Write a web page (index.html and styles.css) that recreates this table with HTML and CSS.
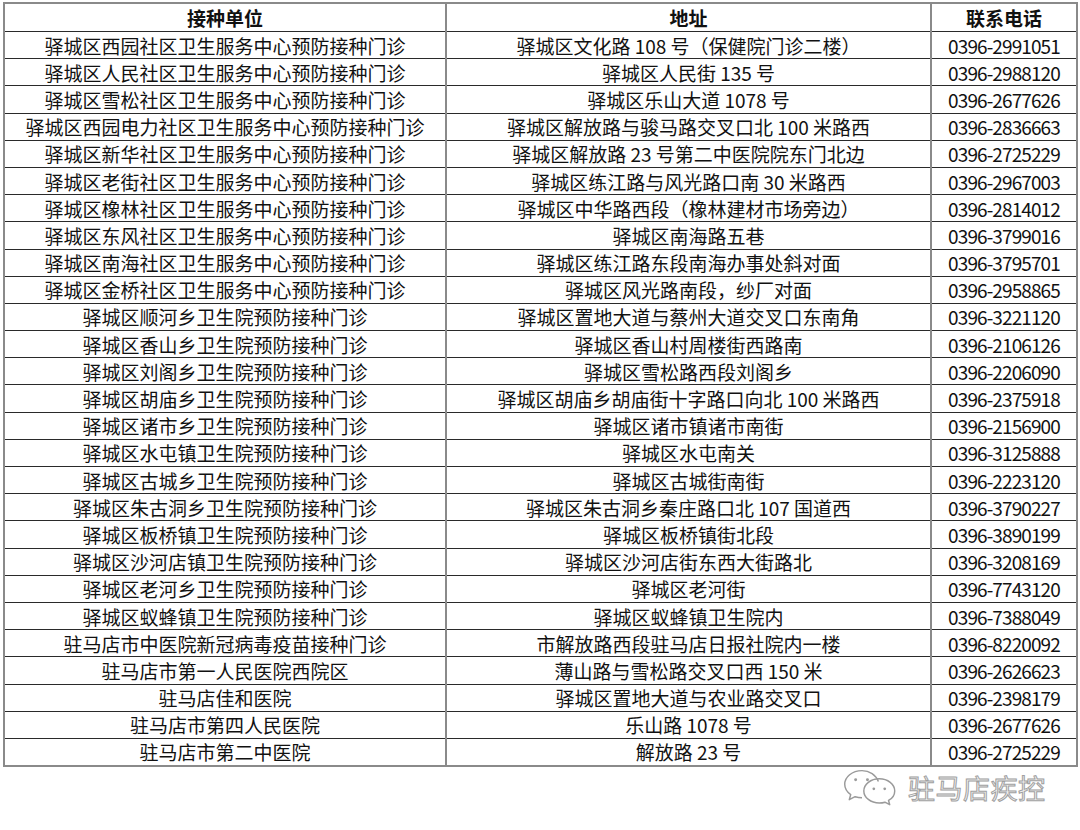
FILE: index.html
```html
<!DOCTYPE html>
<html lang="zh">
<head>
<meta charset="utf-8">
<link rel="stylesheet" href="styles.css">
</head>
<body>
<div class="page">
<table class="grid">
<colgroup><col class="c1"><col class="c2"><col class="c3"></colgroup>
<thead>
<tr><th>接种单位</th><th>地址</th><th>联系电话</th></tr>
</thead>
<tbody>
<tr><td>驿城区西园社区卫生服务中心预防接种门诊</td><td>驿城区文化路 108 号（保健院门诊二楼）</td><td class="tel">0396-2991051</td></tr>
<tr><td>驿城区人民社区卫生服务中心预防接种门诊</td><td>驿城区人民街 135 号</td><td class="tel">0396-2988120</td></tr>
<tr><td>驿城区雪松社区卫生服务中心预防接种门诊</td><td>驿城区乐山大道 1078 号</td><td class="tel">0396-2677626</td></tr>
<tr><td>驿城区西园电力社区卫生服务中心预防接种门诊</td><td>驿城区解放路与骏马路交叉口北 100 米路西</td><td class="tel">0396-2836663</td></tr>
<tr><td>驿城区新华社区卫生服务中心预防接种门诊</td><td>驿城区解放路 23 号第二中医院院东门北边</td><td class="tel">0396-2725229</td></tr>
<tr><td>驿城区老街社区卫生服务中心预防接种门诊</td><td>驿城区练江路与风光路口南 30 米路西</td><td class="tel">0396-2967003</td></tr>
<tr><td>驿城区橡林社区卫生服务中心预防接种门诊</td><td>驿城区中华路西段（橡林建材市场旁边）</td><td class="tel">0396-2814012</td></tr>
<tr><td>驿城区东风社区卫生服务中心预防接种门诊</td><td>驿城区南海路五巷</td><td class="tel">0396-3799016</td></tr>
<tr><td>驿城区南海社区卫生服务中心预防接种门诊</td><td>驿城区练江路东段南海办事处斜对面</td><td class="tel">0396-3795701</td></tr>
<tr><td>驿城区金桥社区卫生服务中心预防接种门诊</td><td>驿城区风光路南段，纱厂对面</td><td class="tel">0396-2958865</td></tr>
<tr><td>驿城区顺河乡卫生院预防接种门诊</td><td>驿城区置地大道与蔡州大道交叉口东南角</td><td class="tel">0396-3221120</td></tr>
<tr><td>驿城区香山乡卫生院预防接种门诊</td><td>驿城区香山村周楼街西路南</td><td class="tel">0396-2106126</td></tr>
<tr><td>驿城区刘阁乡卫生院预防接种门诊</td><td>驿城区雪松路西段刘阁乡</td><td class="tel">0396-2206090</td></tr>
<tr><td>驿城区胡庙乡卫生院预防接种门诊</td><td>驿城区胡庙乡胡庙街十字路口向北 100 米路西</td><td class="tel">0396-2375918</td></tr>
<tr><td>驿城区诸市乡卫生院预防接种门诊</td><td>驿城区诸市镇诸市南街</td><td class="tel">0396-2156900</td></tr>
<tr><td>驿城区水屯镇卫生院预防接种门诊</td><td>驿城区水屯南关</td><td class="tel">0396-3125888</td></tr>
<tr><td>驿城区古城乡卫生院预防接种门诊</td><td>驿城区古城街南街</td><td class="tel">0396-2223120</td></tr>
<tr><td>驿城区朱古洞乡卫生院预防接种门诊</td><td>驿城区朱古洞乡秦庄路口北 107 国道西</td><td class="tel">0396-3790227</td></tr>
<tr><td>驿城区板桥镇卫生院预防接种门诊</td><td>驿城区板桥镇街北段</td><td class="tel">0396-3890199</td></tr>
<tr><td>驿城区沙河店镇卫生院预防接种门诊</td><td>驿城区沙河店街东西大街路北</td><td class="tel">0396-3208169</td></tr>
<tr><td>驿城区老河乡卫生院预防接种门诊</td><td>驿城区老河街</td><td class="tel">0396-7743120</td></tr>
<tr><td>驿城区蚁蜂镇卫生院预防接种门诊</td><td>驿城区蚁蜂镇卫生院内</td><td class="tel">0396-7388049</td></tr>
<tr><td>驻马店市中医院新冠病毒疫苗接种门诊</td><td>市解放路西段驻马店日报社院内一楼</td><td class="tel">0396-8220092</td></tr>
<tr><td>驻马店市第一人民医院西院区</td><td>薄山路与雪松路交叉口西 150 米</td><td class="tel">0396-2626623</td></tr>
<tr><td>驻马店佳和医院</td><td>驿城区置地大道与农业路交叉口</td><td class="tel">0396-2398179</td></tr>
<tr><td>驻马店市第四人民医院</td><td>乐山路 1078 号</td><td class="tel">0396-2677626</td></tr>
<tr><td>驻马店市第二中医院</td><td>解放路 23 号</td><td class="tel">0396-2725229</td></tr>
</tbody>
</table>
<div class="mark">
<svg class="wx" width="64" height="40" viewBox="0 0 70 44" fill="none" stroke="#9a9a9a" stroke-width="1.6" stroke-linejoin="round">
<path d="M24 4C13 4 5 11 5 19c0 4.6 2.6 8.6 6.6 11.3L10 36l6.4-3.3c2.3.7 4.9 1.1 7.6 1.1" />
<path d="M42 16c-2.5-7-9.8-12-18-12" />
<circle cx="17" cy="14" r="1.6" fill="#9a9a9a" stroke="none"/>
<circle cx="30" cy="14" r="1.6" fill="#9a9a9a" stroke="none"/>
<path d="M43 17c-9.4 0-17 6-17 13.3S33.6 43.6 43 43.6c2.2 0 4.3-.3 6.2-.9l5.3 2.8-1.3-4.7C57.4 38.4 60 34.6 60 30.3 60 23 52.4 17 43 17z" transform="translate(0 -4)"/>
<circle cx="37" cy="24" r="1.5" fill="#9a9a9a" stroke="none"/>
<circle cx="49" cy="24" r="1.5" fill="#9a9a9a" stroke="none"/>
</svg>
<span class="mark-text">驻马店疾控</span>
</div>
</div>
</body>
</html>
```

FILE: styles.css
```css
html, body {
  margin: 0;
  padding: 0;
  background: #ffffff;
}
body {
  font-family: "Noto Sans CJK SC", "Noto Sans", sans-serif;
  color: #111;
}
.page {
  position: relative;
  width: 1080px;
  height: 830px;
  padding: 2px 4px 0 3px;
  box-sizing: border-box;
}
.grid {
  width: 1073px;
  border-collapse: collapse;
  table-layout: fixed;
  border: 2px solid #8a8a8a;
}
.c1 { width: 442px; }
.c2 { width: 485px; }
.c3 { width: 146px; }
.grid th, .grid td {
  padding: 0;
  text-align: center;
  white-space: nowrap;
  font-size: 19px;
  line-height: 1;
  border-left: 2px solid #8a8a8a;
  border-right: 2px solid #8a8a8a;
  border-top: 1px solid #2a2a2a;
  border-bottom: 1px solid #2a2a2a;
}
.grid th {
  height: 27px;
  font-weight: bold;
  border-top: 2px solid #8a8a8a;
}
.grid td {
  height: 26.2px;
  font-weight: normal;
}
.grid tbody tr:last-child td {
  border-bottom: 2px solid #8a8a8a;
}
.grid td.tel {
  letter-spacing: -0.9px;
}
.mark {
  position: absolute;
  left: 840px;
  top: 767px;
  display: flex;
  align-items: center;
  gap: 4px;
}
.mark-text {
  font-size: 27px;
  line-height: 1;
  color: #f4f4f4;
  -webkit-text-stroke: 1px #a0a0a0;
  letter-spacing: 0.5px;
}
```
